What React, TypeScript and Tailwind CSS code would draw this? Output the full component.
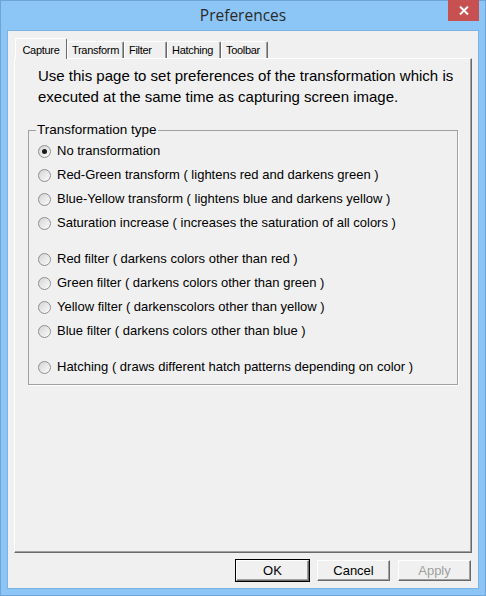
import React from 'react';

const OPTIONS: string[][] = [
  [
    'No transformation',
    'Red-Green transform ( lightens red and darkens green )',
    'Blue-Yellow transform ( lightens blue and darkens yellow )',
    'Saturation increase ( increases the saturation of all colors )',
  ],
  [
    'Red filter ( darkens colors other than red )',
    'Green filter ( darkens colors other than green )',
    'Yellow filter ( darkenscolors other than yellow )',
    'Blue filter ( darkens colors other than blue )',
  ],
  ['Hatching ( draws different hatch patterns depending on color )'],
];

const TABS = [
  { label: 'Capture', w: 'w-[52px]' },
  { label: 'Transform', w: 'w-[57px]' },
  { label: 'Filter', w: 'w-[43px]' },
  { label: 'Hatching', w: 'w-[54px]' },
  { label: 'Toolbar', w: 'w-[47px]' },
];

function Radio({ checked, label }: { checked?: boolean; label: string }) {
  return (
    <div className="flex h-[24px] items-center gap-[6px]">
      <span className="grid h-[13px] w-[13px] place-items-center rounded-full border border-[#8f8f8f] bg-gradient-to-br from-[#d4d4d4] to-[#fcfcfc]">
        {checked ? <span className="h-[5px] w-[5px] rounded-full bg-[#1a1a1a]" /> : null}
      </span>
      <span>{label}</span>
    </div>
  );
}

function Button({ label, primary, disabled }: { label: string; primary?: boolean; disabled?: boolean }) {
  return (
    <div className={primary ? 'border border-black' : 'border border-transparent'}>
      <div
        className={
          'flex h-[21px] w-[73px] items-center justify-center border-t border-l border-t-white border-l-white border-r border-b border-r-[#696969] border-b-[#696969] bg-[#f0f0f0] shadow-[inset_-1px_-1px_0_#a0a0a0] ' +
          (disabled ? 'text-[#a0a0a0]' : 'text-black')
        }
      >
        {label}
      </div>
    </div>
  );
}

export default function App() {
  return (
    <div className="flex h-[596px] w-[486px] flex-col border border-[#6ea4d8] bg-[#8cc6f6] font-['Liberation_Sans',Arial,sans-serif] text-[13px] text-black">
      <div className="relative flex h-[29px] items-center justify-center">
        <span className="font-['Open_Sans',sans-serif] text-[15.5px] text-[#2a2a2a]">Preferences</span>
        <div className="absolute right-[6px] top-[-1px] grid h-[21px] w-[31px] place-items-center bg-[#c75050]">
          <svg width="10" height="9" viewBox="0 0 10 9">
            <path d="M1 0.5 L9 8.5 M9 0.5 L1 8.5" stroke="white" strokeWidth="2" />
          </svg>
        </div>
      </div>

      <div className="mx-[6px] mb-[6px] flex flex-1 flex-col border border-[#7cb2e4] bg-[#f0f0f0] px-[6px] pb-[6px] pt-[7px]">
        <div className="relative z-10 flex h-[20px] items-end pl-[1px] text-[11px] tracking-[-0.3px]">
          {TABS.map((t, i) =>
            i === 0 ? (
              <div
                key={t.label}
                className={`${t.w} -mb-[1px] flex h-[21px] items-start justify-center rounded-t-[2px] border-l border-t border-l-white border-t-white border-r border-r-[#696969] bg-[#f0f0f0] pt-[3px]`}
              >
                {t.label}
              </div>
            ) : (
              <div
                key={t.label}
                className={`${t.w} flex h-[17px] items-center justify-start overflow-hidden whitespace-nowrap rounded-t-[2px] border-l border-t border-l-white border-t-white border-r border-r-[#696969] pl-[4px] shadow-[inset_-1px_0_0_#a0a0a0]`}
              >
                {t.label}
              </div>
            ),
          )}
        </div>

        <div className="flex flex-1 flex-col border-l border-t border-l-white border-t-white border-r border-b border-r-[#696969] border-b-[#696969] shadow-[inset_-1px_-1px_0_#a0a0a0]">
          <p className="pl-[23px] pt-[6px] text-[15px] leading-[21px]">
            Use this page to set preferences of the transformation which is
            <br />
            executed at the same time as capturing screen image.
          </p>

          <fieldset className="ml-[13px] mt-[15px] w-[430px] border border-[#a0a0a0] pb-[5px] pl-[9px] shadow-[1px_1px_0_white]">
            <legend className="-ml-[2px] px-[1px] text-[13.5px] leading-[16px]">Transformation type</legend>
            <div className="flex flex-col gap-[12px] pt-[1px]">
              {OPTIONS.map((group, gi) => (
                <div key={gi} className="flex flex-col">
                  {group.map((label, li) => (
                    <Radio key={label} label={label} checked={gi === 0 && li === 0} />
                  ))}
                </div>
              ))}
            </div>
          </fieldset>
        </div>

        <div className="mt-[6px] flex justify-end gap-[6px]">
          <Button label="OK" primary />
          <Button label="Cancel" />
          <Button label="Apply" disabled />
        </div>
      </div>
    </div>
  );
}
